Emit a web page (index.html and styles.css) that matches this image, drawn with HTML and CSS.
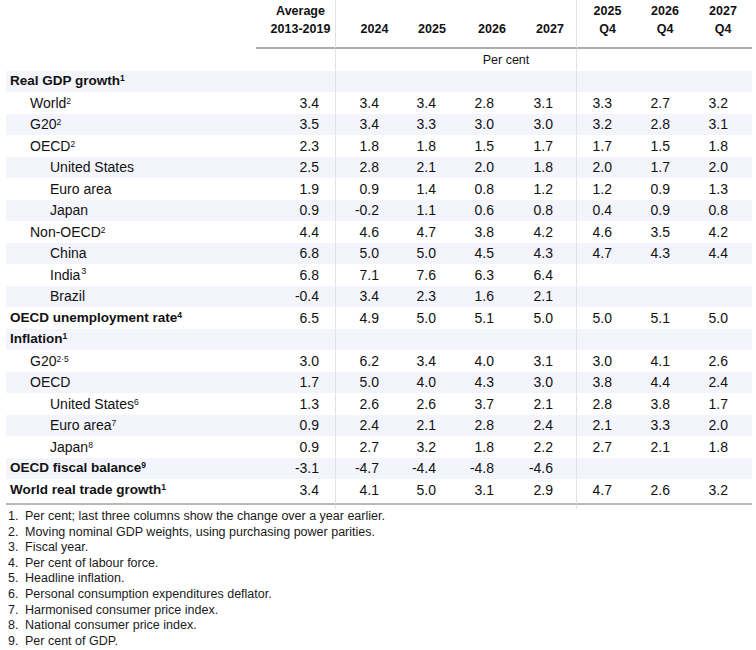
FILE: index.html
```html
<!DOCTYPE html>
<html lang="en">
<head>
<meta charset="utf-8">
<title>Economic projections</title>
<link rel="stylesheet" href="styles.css">
</head>
<body>
<table class="proj">
  <colgroup>
    <col class="w-label"><col class="w-avg"><col class="w-24"><col class="w-25"><col class="w-26"><col class="w-27"><col class="w-q1"><col class="w-q2"><col class="w-q3">
  </colgroup>
  <thead>
    <tr class="head">
      <th class="blank"></th>
      <th>Average<br>2013-2019</th>
      <th>2024</th>
      <th>2025</th>
      <th>2026</th>
      <th>2027</th>
      <th>2025<br>Q4</th>
      <th>2026<br>Q4</th>
      <th>2027<br>Q4</th>
    </tr>
    <tr class="unit">
      <td></td>
      <td></td>
      <td colspan="4" class="unit-main">Per cent</td>
      <td colspan="3" class="unit-q"></td>
    </tr>
  </thead>
  <tbody>
    <tr class="cat"><td class="l0">Real GDP growth<sup class="fn">1</sup></td><td></td><td></td><td></td><td></td><td></td><td></td><td></td><td></td></tr>
    <tr><td class="l1">World<sup class="fn">2</sup></td><td>3.4</td><td>3.4</td><td>3.4</td><td>2.8</td><td>3.1</td><td>3.3</td><td>2.7</td><td>3.2</td></tr>
    <tr><td class="l1">G20<sup class="fn">2</sup></td><td>3.5</td><td>3.4</td><td>3.3</td><td>3.0</td><td>3.0</td><td>3.2</td><td>2.8</td><td>3.1</td></tr>
    <tr><td class="l1">OECD<sup class="fn">2</sup></td><td>2.3</td><td>1.8</td><td>1.8</td><td>1.5</td><td>1.7</td><td>1.7</td><td>1.5</td><td>1.8</td></tr>
    <tr><td class="l2">United States</td><td>2.5</td><td>2.8</td><td>2.1</td><td>2.0</td><td>1.8</td><td>2.0</td><td>1.7</td><td>2.0</td></tr>
    <tr><td class="l2">Euro area</td><td>1.9</td><td>0.9</td><td>1.4</td><td>0.8</td><td>1.2</td><td>1.2</td><td>0.9</td><td>1.3</td></tr>
    <tr><td class="l2">Japan</td><td>0.9</td><td>-0.2</td><td>1.1</td><td>0.6</td><td>0.8</td><td>0.4</td><td>0.9</td><td>0.8</td></tr>
    <tr><td class="l1">Non-OECD<sup class="fn">2</sup></td><td>4.4</td><td>4.6</td><td>4.7</td><td>3.8</td><td>4.2</td><td>4.6</td><td>3.5</td><td>4.2</td></tr>
    <tr><td class="l2">China</td><td>6.8</td><td>5.0</td><td>5.0</td><td>4.5</td><td>4.3</td><td>4.7</td><td>4.3</td><td>4.4</td></tr>
    <tr><td class="l2">India<sup class="hi">3</sup></td><td>6.8</td><td>7.1</td><td>7.6</td><td>6.3</td><td>6.4</td><td></td><td></td><td></td></tr>
    <tr><td class="l2">Brazil</td><td>-0.4</td><td>3.4</td><td>2.3</td><td>1.6</td><td>2.1</td><td></td><td></td><td></td></tr>
    <tr class="cat"><td class="l0">OECD unemployment rate<sup class="fn">4</sup></td><td>6.5</td><td>4.9</td><td>5.0</td><td>5.1</td><td>5.0</td><td>5.0</td><td>5.1</td><td>5.0</td></tr>
    <tr class="cat"><td class="l0">Inflation<sup class="fn">1</sup></td><td></td><td></td><td></td><td></td><td></td><td></td><td></td><td></td></tr>
    <tr><td class="l1">G20<sup class="fn">2·5</sup></td><td>3.0</td><td>6.2</td><td>3.4</td><td>4.0</td><td>3.1</td><td>3.0</td><td>4.1</td><td>2.6</td></tr>
    <tr><td class="l1">OECD</td><td>1.7</td><td>5.0</td><td>4.0</td><td>4.3</td><td>3.0</td><td>3.8</td><td>4.4</td><td>2.4</td></tr>
    <tr><td class="l2">United States<sup class="fn">6</sup></td><td>1.3</td><td>2.6</td><td>2.6</td><td>3.7</td><td>2.1</td><td>2.8</td><td>3.8</td><td>1.7</td></tr>
    <tr><td class="l2">Euro area<sup class="fn">7</sup></td><td>0.9</td><td>2.4</td><td>2.1</td><td>2.8</td><td>2.4</td><td>2.1</td><td>3.3</td><td>2.0</td></tr>
    <tr><td class="l2">Japan<sup class="fn">8</sup></td><td>0.9</td><td>2.7</td><td>3.2</td><td>1.8</td><td>2.2</td><td>2.7</td><td>2.1</td><td>1.8</td></tr>
    <tr class="cat"><td class="l0">OECD fiscal balance<sup class="fn">9</sup></td><td>-3.1</td><td>-4.7</td><td>-4.4</td><td>-4.8</td><td>-4.6</td><td></td><td></td><td></td></tr>
    <tr class="cat"><td class="l0">World real trade growth<sup class="fn">1</sup></td><td>3.4</td><td>4.1</td><td>5.0</td><td>3.1</td><td>2.9</td><td>4.7</td><td>2.6</td><td>3.2</td></tr>
  </tbody>
  <tfoot>
    <tr class="rule"><td></td><td></td><td></td><td></td><td></td><td></td><td></td><td></td><td></td></tr>
    <tr class="tail"><td></td><td></td><td></td><td></td><td></td><td></td><td></td><td></td><td></td></tr>
  </tfoot>
</table>
<ol class="notes">
  <li><span class="num">1.</span><span>Per cent; last three columns show the change over a year earlier.</span></li>
  <li><span class="num">2.</span><span>Moving nominal GDP weights, using purchasing power parities.</span></li>
  <li><span class="num">3.</span><span>Fiscal year.</span></li>
  <li><span class="num">4.</span><span>Per cent of labour force.</span></li>
  <li><span class="num">5.</span><span>Headline inflation.</span></li>
  <li><span class="num">6.</span><span>Personal consumption expenditures deflator.</span></li>
  <li><span class="num">7.</span><span>Harmonised consumer price index.</span></li>
  <li><span class="num">8.</span><span>National consumer price index.</span></li>
  <li><span class="num">9.</span><span>Per cent of GDP.</span></li>
</ol>
</body>
</html>
```
FILE: styles.css
```css
html, body {
  margin: 0;
  padding: 0;
  background: #fff;
}
body {
  font-family: "Liberation Sans", Arial, sans-serif;
  color: #111;
  width: 756px;
}

.proj {
  margin: 0 0 0 6px;
  width: 746px;
  table-layout: fixed;
  border-collapse: separate;
  border-spacing: 0;
}
.w-label { width: 250px; }
.w-avg { width: 79px; }
.w-24 { width: 68px; }
.w-25 { width: 58px; }
.w-26 { width: 59px; }
.w-27 { width: 56px; }
.w-q1 { width: 60px; }
.w-q2 { width: 58px; }
.w-q3 { width: 58px; }

/* header */
.head th {
  font-size: 12.5px;
  font-weight: bold;
  line-height: 18px;
  text-align: center;
  vertical-align: bottom;
  padding: 2px 0 9px;
  border-bottom: 2px solid #adadad;
  white-space: nowrap;
}
.head th.blank { border-bottom: none; }
.head th:nth-child(2) { padding-left: 10px; }
.head th:nth-child(3) { padding-left: 10px; border-left: 1px solid #e2e2e2; }
.head th:nth-child(5) { padding-left: 3px; }
.head th:nth-child(6) { padding-left: 4px; }
.head th:nth-child(7) { padding-left: 2px; border-left: 1px solid #e2e2e2; }

.unit td {
  height: 21px;
  padding: 0;
  font-size: 12.5px;
  line-height: 14px;
  vertical-align: middle;
}
.unit .unit-main {
  text-align: center;
  padding-left: 100px;
  border-left: 1px solid #e2e2e2;
}
.unit .unit-q { border-left: 1px solid #e2e2e2; }

/* body rows */
tbody td {
  height: 20.5px;
  padding: 0;
  border-top: 1px solid #fff;
  font-size: 14px;
  line-height: 16px;
  text-align: right;
  vertical-align: middle;
  white-space: nowrap;
}
tbody tr:nth-child(odd) td { background: #f4f5fc; }

tbody td:nth-child(1) { text-align: left; }
tbody td:nth-child(2) { padding-right: 16px; }
tbody td:nth-child(3) { padding-right: 24px; border-left: 1px solid #e2e2e2; }
tbody td:nth-child(4) { padding-right: 25px; }
tbody td:nth-child(5) { padding-right: 26px; }
tbody td:nth-child(6) { padding-right: 23px; }
tbody td:nth-child(7) { padding-right: 24px; border-left: 1px solid #e2e2e2; }
tbody td:nth-child(8) { padding-right: 24px; }
tbody td:nth-child(9) { padding-right: 24px; }

.l0 { padding-left: 4px !important; font-weight: bold; font-size: 13.5px; }
.l1 { padding-left: 24px !important; }
.l2 { padding-left: 44px !important; }

sup.fn {
  font-size: 8.5px;
  line-height: 0;
  vertical-align: 4px;
}
.l0 sup.fn { font-weight: bold; }
sup.hi {
  font-size: 9px;
  line-height: 0;
  vertical-align: 6px;
  margin-left: 1px;
}

/* bottom rule with the column dividers running just past it */
tfoot td { padding: 0; }
.rule td {
  height: 3px;
  border-bottom: 2px solid #b8b8b8;
}
.tail td { height: 4px; }
.rule td:nth-child(3), .rule td:nth-child(7),
.tail td:nth-child(3), .tail td:nth-child(7) {
  border-left: 1px solid #e2e2e2;
}

/* notes */
.notes {
  list-style: none;
  margin: 0;
  padding: 0 0 0 8px;
  font-size: 12.5px;
  line-height: 15.6px;
  color: #1a1a1a;
}
.notes li {
  display: grid;
  grid-template-columns: 17px 1fr;
}
```
